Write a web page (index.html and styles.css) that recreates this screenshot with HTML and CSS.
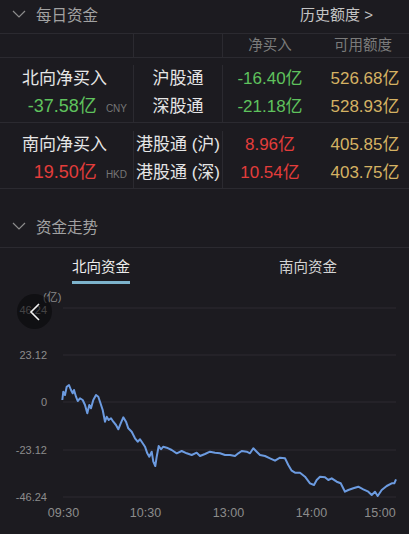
FILE: index.html
```html
<!DOCTYPE html>
<html lang="zh-CN">
<head>
    <meta charset="UTF-8">
    <meta name="viewport" content="width=device-width, initial-scale=1.0">
    <title>每日资金</title>
    <link rel="stylesheet" href="styles.css">
</head>
<body>
    <div class="app">
        <!-- 每日资金 -->
        <div class="section-head top">
            <svg class="fold" width="14" height="8" viewBox="0 0 14 8"><polyline points="1,1 7,7 13,1" /></svg>
            <span class="title">每日资金</span>
            <span class="more">历史额度 &gt;</span>
        </div>

        <div class="flow-table">
            <div class="row head">
                <div class="cell c1"></div>
                <div class="cell c2"></div>
                <div class="cell c3">净买入</div>
                <div class="cell c4">可用额度</div>
            </div>
            <div class="row group">
                <div class="cell c1">
                    <div class="line name">北向净买入</div>
                    <div class="line total"><span class="num green">-37.58亿</span><span class="cur">CNY</span></div>
                </div>
                <div class="cell c2">
                    <div class="line">沪股通</div>
                    <div class="line">深股通</div>
                </div>
                <div class="cell c3">
                    <div class="line num green">-16.40亿</div>
                    <div class="line num green">-21.18亿</div>
                </div>
                <div class="cell c4">
                    <div class="line num gold">526.68亿</div>
                    <div class="line num gold">528.93亿</div>
                </div>
            </div>
            <div class="row group">
                <div class="cell c1">
                    <div class="line name">南向净买入</div>
                    <div class="line total"><span class="num red">19.50亿</span><span class="cur">HKD</span></div>
                </div>
                <div class="cell c2">
                    <div class="line">港股通 (沪)</div>
                    <div class="line">港股通 (深)</div>
                </div>
                <div class="cell c3">
                    <div class="line num red">8.96亿</div>
                    <div class="line num red">10.54亿</div>
                </div>
                <div class="cell c4">
                    <div class="line num gold">405.85亿</div>
                    <div class="line num gold">403.75亿</div>
                </div>
            </div>
        </div>

        <!-- 资金走势 -->
        <div class="section-head trend">
            <svg class="fold" width="14" height="8" viewBox="0 0 14 8"><polyline points="1,1 7,7 13,1" /></svg>
            <span class="title">资金走势</span>
        </div>

        <div class="tabs">
            <div class="tab active"><span>北向资金</span></div>
            <div class="tab"><span>南向资金</span></div>
        </div>

        <div class="chart">
            <svg width="409" height="246" viewBox="0 288 409 246">
                <g class="grid">
                    <line x1="63" y1="308" x2="396" y2="308" />
                    <line x1="63" y1="355" x2="396" y2="355" />
                    <line x1="63" y1="402" x2="396" y2="402" />
                    <line x1="63" y1="450" x2="396" y2="450" />
                    <line x1="63" y1="497" x2="396" y2="497" />
                </g>
                <text class="unit" x="43" y="301">(亿)</text>
                <g class="ylab">
                    <text x="47" y="314">46.24</text>
                    <text x="47" y="359">23.12</text>
                    <text x="47" y="406">0</text>
                    <text x="47" y="454">-23.12</text>
                    <text x="47" y="501">-46.24</text>
                </g>
                <g class="xlab">
                    <text x="63.5" y="516.5">09:30</text>
                    <text x="145.5" y="516.5">10:30</text>
                    <text x="228.5" y="516.5">13:00</text>
                    <text x="311.5" y="516.5">14:00</text>
                    <text x="380" y="516.5">15:00</text>
                </g>
                <polyline class="flow" points="62.3,400 63.3,391.7 65,395 66.7,386.7 69,385 71,390 72.7,393.3 74,390 76,396.7 77.7,401 80,398.3 82.7,400 85,405 87.3,413.3 89.3,405 91,408.3 93.3,400 96,395 98.3,396.7 100,401.7 102.7,410 105,421.7 106.7,416.7 108.7,420 111,418.3 113.3,421.7 116,425 118.3,429.3 120.7,423.3 123.3,417.3 126,421.7 128.3,428.3 131.7,431.7 135,438.3 137.7,441.7 140,439.3 142.7,443.3 145,446.7 147.3,453.3 149.3,456.7 151.7,451.7 153.3,461.7 155.3,466 156.7,456.7 158.7,446 161,449.3 163.3,446.7 166.7,447.7 171.7,450 176.7,453.3 181.7,451 186.7,453.3 191.7,455 196.7,452.7 200,456 205,454 210,451.7 215,452.7 220,453.3 225,455 230,455 235,456 238.3,453.3 241.7,451 246.7,451.7 250,453.3 253.3,448.3 256.7,451.7 260,455 265,456 270,458.3 275,460.7 280,457.7 285,458.3 288.3,465 291.7,470.7 295,472.7 300,472.7 305,476.7 310,483.3 314,485 316.7,480 320,476.7 325,477.3 328.3,480 331.7,478.3 336.7,481.7 340.7,483.3 345,491.7 348.3,490 353.3,488.3 358.3,486.7 363.3,489.3 368.3,491.7 371.7,495 375,491.7 377.7,496 381.7,490 386.7,486 391.7,483.3 394.3,483.3 396,479.3" />
            </svg>
            <div class="back">
                <svg width="12" height="18" viewBox="0 0 12 18"><polyline points="10,1 2,9 10,17" /></svg>
            </div>
        </div>
    </div>
</body>
</html>
```

FILE: styles.css
```css
body {
    margin: 0;
    background-color: #1c1b20;
    font-family: "Liberation Sans", "Noto Sans CJK SC", sans-serif;
    color: #e6e6e6;
}
.app {
    width: 409px;
    height: 534px;
    overflow: hidden;
}
.section-head {
    display: flex;
    align-items: center;
    box-sizing: border-box;
    border-bottom: 1px solid #2b2a30;
    padding-left: 12px;
}
.section-head.top {
    height: 34px;
    padding-bottom: 6px;
}
.section-head.trend {
    margin-top: 18px;
    height: 41px;
    padding-bottom: 2px;
}
.fold {
    fill: none;
    stroke: #8c8c8c;
    stroke-width: 1.2;
    margin-right: 10px;
}
.title {
    font-size: 15.5px;
    color: #a2a2a2;
}
.more {
    margin-left: auto;
    margin-right: 36px;
    font-size: 15px;
    color: #c4c4c4;
}
.row {
    display: grid;
    grid-template-columns: 134px 89px 94px 92px;
    box-sizing: border-box;
    border-bottom: 1px solid #2b2a30;
}
.cell {
    text-align: center;
}
.c1, .c2 {
    border-right: 1px solid #2b2a30;
}
.row.head {
    height: 24px;
    font-size: 14.5px;
    color: #7b7b7b;
    line-height: 23px;
}
.row.group {
    height: 65px;
    padding-top: 7px;
}
.row.group:last-child {
    height: 66px;
    padding-top: 8px;
}
.line {
    height: 27.5px;
    line-height: 27.5px;
    font-size: 17px;
    white-space: nowrap;
}
.c1 .name {
    text-align: left;
    padding-left: 22px;
}
.c1 .total {
    display: flex;
    justify-content: flex-end;
    align-items: baseline;
    padding-right: 6px;
}
.total .num {
    font-size: 18px;
}
.cur {
    margin-left: 9px;
    font-size: 10px;
    color: #767676;
}
.c4 .line {
    padding-left: 4px;
}
.green {
    color: #5fc25d;
}
.red {
    color: #e33d3b;
}
.gold {
    color: #d5b263;
}
.tabs {
    display: flex;
    height: 40px;
}
.tab {
    flex: 1;
    display: flex;
    justify-content: center;
    padding-top: 9px;
    font-size: 14.5px;
    color: #d4d4d4;
}
.tab:first-child {
    padding-right: 5px;
}
.tab span {
    height: 27px;
    line-height: 20px;
    box-sizing: border-box;
}
.tab.active span {
    color: #ececec;
    border-bottom: 3px solid #7db3cc;
}
.chart {
    position: relative;
}
.chart svg {
    display: block;
}
.grid line {
    stroke: #2c2b31;
    stroke-width: 1;
}
.unit {
    font-size: 11px;
    fill: #8a8a8a;
}
.ylab text {
    font-size: 11px;
    fill: #8c8c8c;
    text-anchor: end;
}
.xlab text {
    font-size: 12.5px;
    fill: #8c8c8c;
    text-anchor: middle;
}
.flow {
    fill: none;
    stroke: #6c9be0;
    stroke-width: 2;
    stroke-linejoin: round;
}
.back {
    position: absolute;
    left: 17px;
    top: 6px;
    width: 35px;
    height: 35px;
    border-radius: 50%;
    background-color: rgba(8, 8, 10, 0.55);
    display: flex;
    align-items: center;
    justify-content: center;
}
.back svg {
    fill: none;
    stroke: #f2f2f2;
    stroke-width: 1.6;
}
```
